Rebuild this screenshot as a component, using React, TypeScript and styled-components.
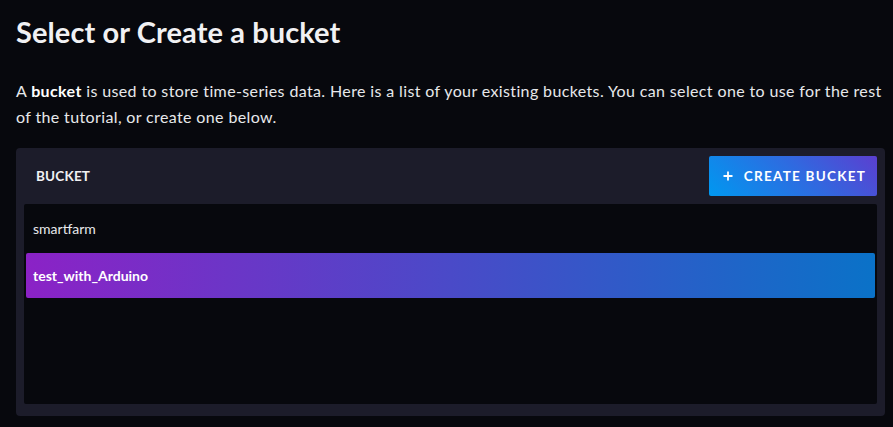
import React from "react";
import styled, { createGlobalStyle } from "styled-components";

const Global = createGlobalStyle`
  html, body { margin: 0; padding: 0; background: #07080d; }
  body { font-family: "Lato", "Open Sans", sans-serif; color: #e7e8eb; }
  * { box-sizing: border-box; }
`;

const Page = styled.div`
  padding: 14px 8px 0 16px;
`;

const Title = styled.h1`
  margin: 0;
  font-size: 29px;
  line-height: 36px;
  font-weight: 700;
  letter-spacing: 0.1px;
  color: #f1f1f3;
`;

const Intro = styled.p`
  margin: 28px 0 18px;
  font-size: 16px;
  line-height: 26px;
  letter-spacing: 0.37px;
  color: #e7e8eb;
  b { font-weight: 700; color: #ffffff; }
`;

const Panel = styled.section`
  background: #1c1c2a;
  border-radius: 4px;
  padding: 8px 8px 12px;
`;

const Header = styled.div`
  display: flex;
  align-items: center;
  justify-content: space-between;
  height: 40px;
  margin-bottom: 8px;
`;

const HeaderLabel = styled.span`
  padding-left: 12px;
  font-size: 13.5px;
  font-weight: 700;
  letter-spacing: 0.2px;
  text-transform: uppercase;
  color: #f1f1f3;
`;

const CreateButton = styled.button`
  display: flex;
  align-items: center;
  gap: 11px;
  height: 40px;
  padding: 0 11px 0 14px;
  border: 0;
  border-radius: 2px;
  background: linear-gradient(45deg, #0098f0 0%, #2f6ae0 55%, #5b3fd0 100%);
  color: #ffffff;
  font-family: inherit;
  font-size: 13.5px;
  font-weight: 700;
  letter-spacing: 1.25px;
  text-transform: uppercase;
  cursor: pointer;
`;

const List = styled.div`
  display: flex;
  flex-direction: column;
  gap: 2px;
  height: 200px;
  padding: 2px;
  background: #07080d;
  border-radius: 2px;
`;

const Row = styled.div<{ $selected?: boolean }>`
  display: flex;
  align-items: center;
  height: 45px;
  padding: 0 7px;
  border-radius: 2px;
  font-size: 14px;
  font-weight: ${(p) => (p.$selected ? 700 : 400)};
  color: ${(p) => (p.$selected ? "#ffffff" : "#e7e8eb")};
  background: ${(p) =>
    p.$selected ? "linear-gradient(90deg, #8b22c6 0%, #4a4ac8 50%, #0a72c8 100%)" : "transparent"};
`;

const Plus = () => (
  <svg width="10" height="10" viewBox="0 0 10 10" aria-hidden>
    <path d="M5 0.5v9M0.5 5h9" stroke="#fff" strokeWidth="1.8" />
  </svg>
);

export default function App() {
  return (
    <Page>
      <Global />
      <Title>Select or Create a bucket</Title>
      <Intro>
        A <b>bucket</b> is used to store time-series data. Here is a list of your existing buckets. You can
        select one to use for the rest of the tutorial, or create one below.
      </Intro>
      <Panel>
        <Header>
          <HeaderLabel>Bucket</HeaderLabel>
          <CreateButton>
            <Plus />
            Create Bucket
          </CreateButton>
        </Header>
        <List>
          <Row>smartfarm</Row>
          <Row $selected>test_with_Arduino</Row>
        </List>
      </Panel>
    </Page>
  );
}
